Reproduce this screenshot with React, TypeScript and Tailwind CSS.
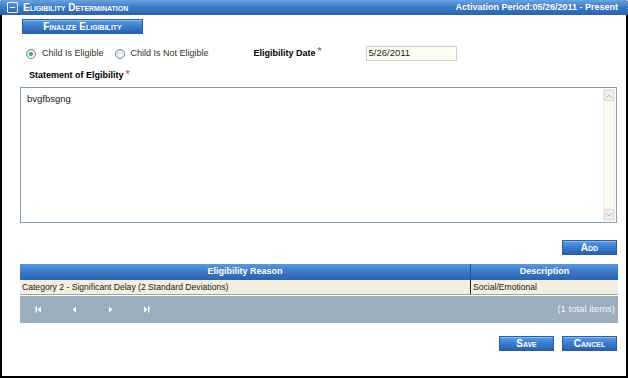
import React from "react";

const btn =
  "h-[15px] flex items-center justify-center text-white text-[10px] font-bold [font-variant:small-caps] bg-gradient-to-b from-[#5b9be0] via-[#3a7ccc] to-[#2563b3] border border-[#2a5e9e] shadow-[inset_0_1px_0_#8cbcf0]";

function Radio({ checked }: { checked?: boolean }) {
  return (
    <span className="w-[10px] h-[10px] rounded-full border border-[#6d7f93] bg-gradient-to-br from-[#dfe6ee] to-white flex items-center justify-center">
      {checked && <span className="w-[4px] h-[4px] rounded-full bg-[#2fb82f]" />}
    </span>
  );
}

function Star() {
  return <span className="text-[#b5403a] text-[11px] ml-[2px] -mt-[4px]">*</span>;
}

function PagerIcon({ kind }: { kind: "first" | "prev" | "next" | "last" }) {
  return (
    <svg width="7" height="7" viewBox="0 0 7 7" className="fill-white">
      {kind === "first" && (
        <>
          <rect x="0.5" y="0.5" width="1.5" height="6" />
          <polygon points="6,0.5 2.5,3.5 6,6.5" />
        </>
      )}
      {kind === "prev" && <polygon points="5,0.5 1.5,3.5 5,6.5" />}
      {kind === "next" && <polygon points="2,0.5 5.5,3.5 2,6.5" />}
      {kind === "last" && (
        <>
          <polygon points="1,0.5 4.5,3.5 1,6.5" />
          <rect x="5" y="0.5" width="1.5" height="6" />
        </>
      )}
    </svg>
  );
}

export default function App() {
  return (
    <div className="w-[628px] h-[378px] bg-white font-['Liberation_Sans',Arial,sans-serif] text-[#222]">
      <div className="h-full flex flex-col border-x-2 border-b-2 border-black rounded-t-[3px]">
        {/* Header */}
        <div className="h-[15px] -mx-[2px] flex items-center justify-between pl-[7px] pr-[10px] rounded-t-[3px] bg-gradient-to-b from-[#6aa2e0] via-[#3b79c6] to-[#2a63ae] text-white">
          <div className="flex items-center gap-[5px]">
            <span className="w-[11px] h-[11px] border border-white/90 rounded-[1px] flex items-center justify-center">
              <span className="w-[5px] h-[1.5px] bg-white" />
            </span>
            <span className="text-[10px] font-bold [font-variant:small-caps]">Eligibility Determination</span>
          </div>
          <span className="text-[9px] font-bold">Activation Period:05/26/2011 - Present</span>
        </div>

        <div className="flex flex-col pl-[18px] pr-[9px]">
          <div className={`${btn} w-[121px] mt-[4px] ml-[2px]`}>Finalize Eligibility</div>

          {/* Radios + date */}
          <div className="flex items-center h-[15px] mt-[12px] text-[9px]">
            <div className="flex items-center ml-[6px] gap-[6px]">
              <Radio checked />
              <span className="text-[#332]">Child Is Eligible</span>
            </div>
            <div className="flex items-center ml-[11px] gap-[6px]">
              <Radio />
              <span className="text-[#332]">Child Is Not Eligible</span>
            </div>
            <div className="flex items-center ml-[45px] w-[112px]">
              <span className="font-bold text-[9px] text-black">Eligibility Date</span>
              <Star />
            </div>
            <div className="w-[91px] h-[15px] border border-[#d2d2cc] bg-[#fffff0] flex items-center pl-[2px] text-[9.5px] text-[#222]">
              5/26/2011
            </div>
          </div>

          <div className="flex items-center mt-[9px] ml-[9px] h-[12px]">
            <span className="font-bold text-[9px] text-black">Statement of Elgibility</span>
            <Star />
          </div>

          {/* Textarea */}
          <div className="mt-[5px] h-[136px] border border-[#7f9db9] flex">
            <div className="flex-1 pl-[6px] pt-[4px] text-[9.5px] text-[#222]">bvgfbsgng</div>
            <div className="w-[12px] mr-[1px] my-[1px] bg-[#fbfbf3] border border-[#eeeee6] flex flex-col justify-between">
              <div className="h-[11px] bg-[#efefe7] border border-[#dcdcd4] flex items-center justify-center">
                <svg width="6" height="4" viewBox="0 0 6 4"><polyline points="0.5,3.5 3,1 5.5,3.5" fill="none" stroke="#b8b8b0" strokeWidth="1" /></svg>
              </div>
              <div className="h-[11px] bg-[#efefe7] border border-[#dcdcd4] flex items-center justify-center">
                <svg width="6" height="4" viewBox="0 0 6 4"><polyline points="0.5,0.5 3,3 5.5,0.5" fill="none" stroke="#b8b8b0" strokeWidth="1" /></svg>
              </div>
            </div>
          </div>

          <div className="flex justify-end mt-[17px]">
            <div className={`${btn} w-[55px]`}>Add</div>
          </div>

          {/* Table */}
          <div className="mt-[9px] w-[598px]">
            <div className="h-[16px] flex text-white text-[9px] font-bold bg-gradient-to-b from-[#5f98da] via-[#3a77c4] to-[#2b64ae]">
              <div className="w-[451px] flex items-center justify-center border-r border-[#28558f]">Eligibility Reason</div>
              <div className="flex-1 flex items-center justify-center">Description</div>
            </div>
            <div className="h-[15px] flex text-[8.6px] text-[#221] bg-[#f3efe3] border-b border-[#9aa3ad]">
              <div className="w-[451px] flex items-center pl-[2px] border-r border-[#222]">Category 2 - Significant Delay (2 Standard Deviations)</div>
              <div className="flex-1 flex items-center pl-[2px]">Social/Emotional</div>
            </div>
            <div className="h-[27px] mt-[1px] bg-[#9cadbe] flex items-center pl-[15px] pr-[3px]">
              <div className="flex items-center gap-[29px]">
                <PagerIcon kind="first" />
                <PagerIcon kind="prev" />
                <PagerIcon kind="next" />
                <PagerIcon kind="last" />
              </div>
              <span className="ml-auto text-[9.5px] text-[#f4f6f8]">(1 total items)</span>
            </div>
          </div>

          <div className="flex justify-end gap-[8px] mt-[13px]">
            <div className={`${btn} w-[55px]`}>Save</div>
            <div className={`${btn} w-[55px]`}>Cancel</div>
          </div>
        </div>
      </div>
    </div>
  );
}
